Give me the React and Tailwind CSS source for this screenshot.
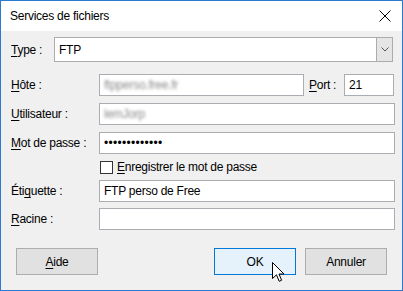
import React from "react";

function U({ children }) {
  return <span className="underline underline-offset-[2px] decoration-[1px]">{children}</span>;
}

function Input({ className = "", children }) {
  return (
    <div className={"h-[22px] bg-white border border-[#abadb3] flex items-center pl-[4px] " + className}>
      {children}
    </div>
  );
}

function Blur({ children }) {
  return <span className="text-[#8a8a8a] blur-[1.4px]">{children}</span>;
}

export default function App() {
  return (
    <div className="w-[403px] h-[291px] border border-[#2b79d0] bg-[#f0f0f0] flex flex-col text-[12px] leading-none tracking-[-0.25px] text-black font-['Liberation_Sans',Arial,sans-serif]">
      <div className="h-[30px] shrink-0 bg-white flex items-center justify-between pl-[9px] pr-[11px]">
        <span>Services de fichiers</span>
        <svg width="12" height="12" viewBox="0 0 12 12">
          <path d="M0.5 0.5 L11.5 11.5 M11.5 0.5 L0.5 11.5" stroke="#000" strokeWidth="1" fill="none" />
        </svg>
      </div>
      <div className="flex flex-col pl-[10px] pt-[6px]">
        <div className="flex items-center h-[25px]">
          <span className="w-[43px]"><U>T</U>ype :</span>
          <div className="w-[339px] h-[25px] bg-white border border-[#acacac] flex items-center">
            <span className="flex-1 pl-[4px]">FTP</span>
            <div className="w-[16px] h-[23px] bg-[#e5e5e5] border-l border-[#acacac] flex items-center justify-center">
              <svg width="8" height="5" viewBox="0 0 8 5">
                <path d="M0.5 0.5 L4 4 L7.5 0.5" stroke="#555" strokeWidth="1" fill="none" />
              </svg>
            </div>
          </div>
        </div>
        <div className="flex items-center mt-[12px]">
          <span className="w-[88px]"><U>H</U>ôte :</span>
          <Input className="w-[205px]"><Blur>ftpperso.free.fr</Blur></Input>
          <span className="ml-[5px] w-[35px]"><U>P</U>ort : </span>
          <Input className="w-[50px] pl-[2px]">21</Input>
        </div>
        <div className="flex items-center mt-[7px]">
          <span className="w-[88px]"><U>U</U>tilisateur :</span>
          <Input className="w-[296px]"><Blur>lemJorp</Blur></Input>
        </div>
        <div className="flex items-center mt-[7px]">
          <span className="w-[88px]"><U>M</U>ot de passe :</span>
          <Input className="w-[296px] tracking-[0.3px]">•••••••••••••</Input>
        </div>
        <div className="flex items-center h-[26px] pl-[89px]">
          <div className="w-[13px] h-[13px] bg-white border border-[#333]"></div>
          <span className="ml-[4px]"><U>E</U>nregistrer le mot de passe</span>
        </div>
        <div className="flex items-center">
          <span className="w-[88px]">Éti<U>q</U>uette :</span>
          <Input className="w-[296px]">FTP perso de Free</Input>
        </div>
        <div className="flex items-center mt-[6px]">
          <span className="w-[88px]"><U>R</U>acine :</span>
          <Input className="w-[296px]"></Input>
        </div>
        <div className="flex items-center mt-[18px] pl-[5px]">
          <div className="w-[82px] h-[27px] bg-[#e1e1e1] border border-[#adadad] flex items-center justify-center">
            <span><U>A</U>ide</span>
          </div>
          <div className="relative ml-[116px] w-[82px] h-[27px] bg-[#e5f1fb] border border-[#0078d7] flex items-center justify-center">
            <span>OK</span>
            <svg className="absolute left-[57px] top-[13px]" width="13" height="21" viewBox="0 0 13 21">
              <path d="M0.5 0.5 L0.5 16.5 L4.5 12.8 L7.2 19.3 L9.6 18.3 L7 12 L12 12 Z" fill="#fff" stroke="#000" strokeWidth="1" strokeLinejoin="miter" />
            </svg>
          </div>
          <div className="ml-[9px] w-[82px] h-[27px] bg-[#e1e1e1] border border-[#adadad] flex items-center justify-center">
            <span>Annuler</span>
          </div>
        </div>
      </div>
    </div>
  );
}
